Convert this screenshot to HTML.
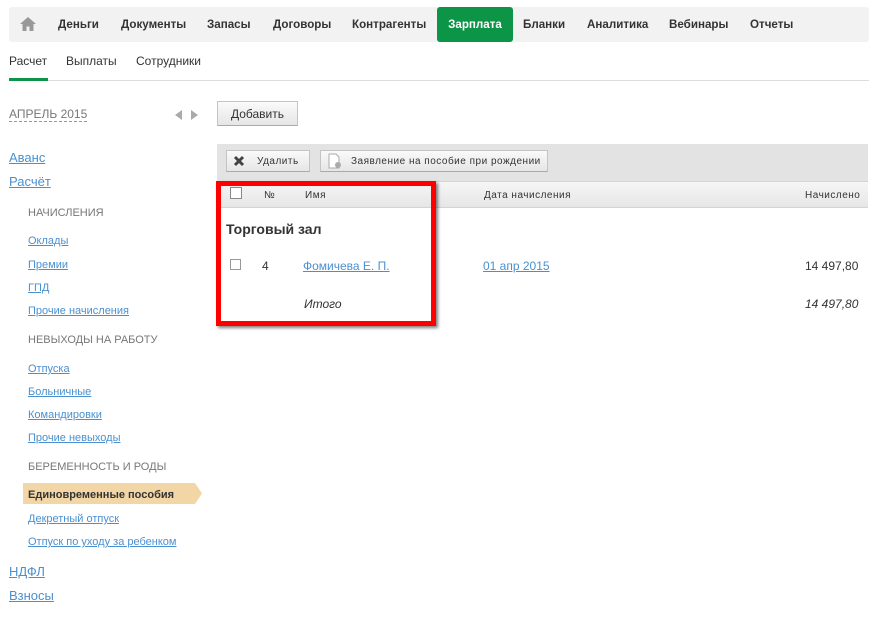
<!DOCTYPE html>
<html><head><meta charset="utf-8"><style>
*{margin:0;padding:0;box-sizing:border-box}
body{width:882px;height:617px;background:#fff;font-family:"Liberation Sans",Arial,sans-serif;position:relative;overflow:hidden;color:#333}
.a{position:absolute;line-height:16px;white-space:nowrap;margin-top:1px}
.nav{position:absolute;left:9px;top:7px;width:860px;height:35px;background:#f2f2f2;border-radius:3px}
.ni{position:absolute;top:7px;height:35px;line-height:36px;font-size:11.6px;font-weight:bold;color:#333}
.lk{color:#4a90d0;text-decoration:underline}
.s1{font-size:11px}
.s2{font-size:13px}
.gr{color:#777;font-size:11px}
.btn{position:absolute;border:1px solid #c4c4c4;border-bottom-color:#aaa;background:linear-gradient(#fafafa,#e6e6e6);font-size:10px;letter-spacing:.5px;color:#333}
</style></head><body>
<div class="nav"></div>
<svg style="position:absolute;left:19px;top:16px" width="18" height="16" viewBox="0 0 18 16"><path d="M9 1 L1 8 H3.5 V15 H7.5 V10.5 H10.5 V15 H14.5 V8 H17 Z" fill="#999"/></svg>
<div class="ni" style="left:58px">Деньги</div>
<div class="ni" style="left:121px">Документы</div>
<div class="ni" style="left:207px">Запасы</div>
<div class="ni" style="left:273px">Договоры</div>
<div class="ni" style="left:352px">Контрагенты</div>
<div class="ni" style="left:437px;width:76px;background:#0c9447;color:#fff;border-radius:3px;text-align:center">Зарплата</div>
<div class="ni" style="left:523px">Бланки</div>
<div class="ni" style="left:587px">Аналитика</div>
<div class="ni" style="left:669px">Вебинары</div>
<div class="ni" style="left:750px">Отчеты</div>

<div class="a" style="left:9px;top:52px;font-size:12px">Расчет</div>
<div class="a" style="left:66px;top:52px;font-size:12px">Выплаты</div>
<div class="a" style="left:136px;top:52px;font-size:12px">Сотрудники</div>
<div style="position:absolute;left:9px;top:80px;width:860px;height:1px;background:#ddd"></div>
<div style="position:absolute;left:9px;top:78px;width:39px;height:3px;background:#0c9447"></div>

<div class="a" style="left:9px;top:106px;font-size:12px;color:#777;border-bottom:1px dashed #999;line-height:14px">АПРЕЛЬ 2015</div>
<div style="position:absolute;left:175px;top:110px;border-right:7px solid #aaa;border-top:5px solid transparent;border-bottom:5px solid transparent"></div>
<div style="position:absolute;left:191px;top:110px;border-left:7px solid #aaa;border-top:5px solid transparent;border-bottom:5px solid transparent"></div>
<div class="btn" style="left:217px;top:101px;width:81px;height:25px;line-height:24px;text-align:center;font-size:12px;letter-spacing:0">Добавить</div>

<div style="position:absolute;left:217px;top:144px;width:651px;height:37px;background:#e3e3e3"></div>
<div class="btn" style="left:226px;top:150px;width:84px;height:22px;line-height:21px;padding-left:30px">Удалить</div>
<svg style="position:absolute;left:233px;top:155px" width="12" height="12" viewBox="0 0 12 12"><path d="M2 2L10 10M10 2L2 10" stroke="#444" stroke-width="3"/></svg>
<div class="btn" style="left:320px;top:150px;width:228px;height:22px;line-height:21px;padding-left:30px">Заявление на пособие при рождении</div>
<svg style="position:absolute;left:328px;top:153px" width="14" height="16" viewBox="0 0 14 16"><path d="M1 1H8L11 4V15H1Z" fill="#fff" stroke="#aaa"/><circle cx="10" cy="12" r="3" fill="#aaa"/></svg>

<div style="position:absolute;left:217px;top:181px;width:651px;height:27px;background:linear-gradient(#f6f6f6,#e6e6e6);border-top:1px solid #d4d4d4;border-bottom:1px solid #d4d4d4"></div>
<div style="position:absolute;left:230px;top:187px;width:12px;height:12px;border:1px solid #888;background:#fff"></div>
<div class="a" style="left:264px;top:187px;font-size:10px">№</div>
<div class="a" style="left:305px;top:187px;font-size:10px;letter-spacing:.5px">Имя</div>
<div class="a" style="left:484px;top:187px;font-size:10px;letter-spacing:.5px">Дата начисления</div>
<div class="a" style="left:805px;top:187px;font-size:10px;letter-spacing:.5px">Начислено</div>

<div class="a" style="left:226px;top:220px;font-size:14px;font-weight:bold">Торговый зал</div>
<div style="position:absolute;left:230px;top:259px;width:11px;height:11px;border:1px solid #999;background:#fff"></div>
<div class="a s1" style="left:262px;top:257px;font-size:12px">4</div>
<div class="a lk" style="left:303px;top:257px;font-size:12px">Фомичева Е. П.</div>
<div class="a lk" style="left:483px;top:257px;font-size:12px">01 апр 2015</div>
<div class="a" style="left:805px;top:257px;font-size:12px">14 497,80</div>
<div class="a" style="left:304px;top:295px;font-size:12px;font-style:italic">Итого</div>
<div class="a" style="left:805px;top:295px;font-size:12px;font-style:italic">14 497,80</div>

<div style="position:absolute;left:216px;top:181px;width:220px;height:145px;border:5px solid #f00;box-shadow:2px 2px 3px rgba(0,0,0,.5)"></div>

<div class="a lk s2" style="left:9px;top:149px">Аванс</div>
<div class="a lk s2" style="left:9px;top:173px">Расчёт</div>
<div class="a gr" style="left:28px;top:204px">НАЧИСЛЕНИЯ</div>
<div class="a lk s1" style="left:28px;top:232px">Оклады</div>
<div class="a lk s1" style="left:28px;top:256px">Премии</div>
<div class="a lk s1" style="left:28px;top:279px">ГПД</div>
<div class="a lk s1" style="left:28px;top:302px">Прочие начисления</div>
<div class="a gr" style="left:28px;top:331px">НЕВЫХОДЫ НА РАБОТУ</div>
<div class="a lk s1" style="left:28px;top:360px">Отпуска</div>
<div class="a lk s1" style="left:28px;top:383px">Больничные</div>
<div class="a lk s1" style="left:28px;top:406px">Командировки</div>
<div class="a lk s1" style="left:28px;top:429px">Прочие невыходы</div>
<div class="a gr" style="left:28px;top:458px">БЕРЕМЕННОСТЬ И РОДЫ</div>
<svg style="position:absolute;left:23px;top:483px" width="180" height="21"><path d="M0 0H172L179 10.5L172 21H0Z" fill="#f2d6a6"/></svg>
<div class="a" style="left:28px;top:486px;font-size:11px;font-weight:bold;color:#333">Единовременные пособия</div>
<div class="a lk s1" style="left:28px;top:510px">Декретный отпуск</div>
<div class="a lk s1" style="left:28px;top:533px">Отпуск по уходу за ребенком</div>
<div class="a lk s2" style="left:9px;top:563px">НДФЛ</div>
<div class="a lk s2" style="left:9px;top:587px">Взносы</div>
</body></html>
